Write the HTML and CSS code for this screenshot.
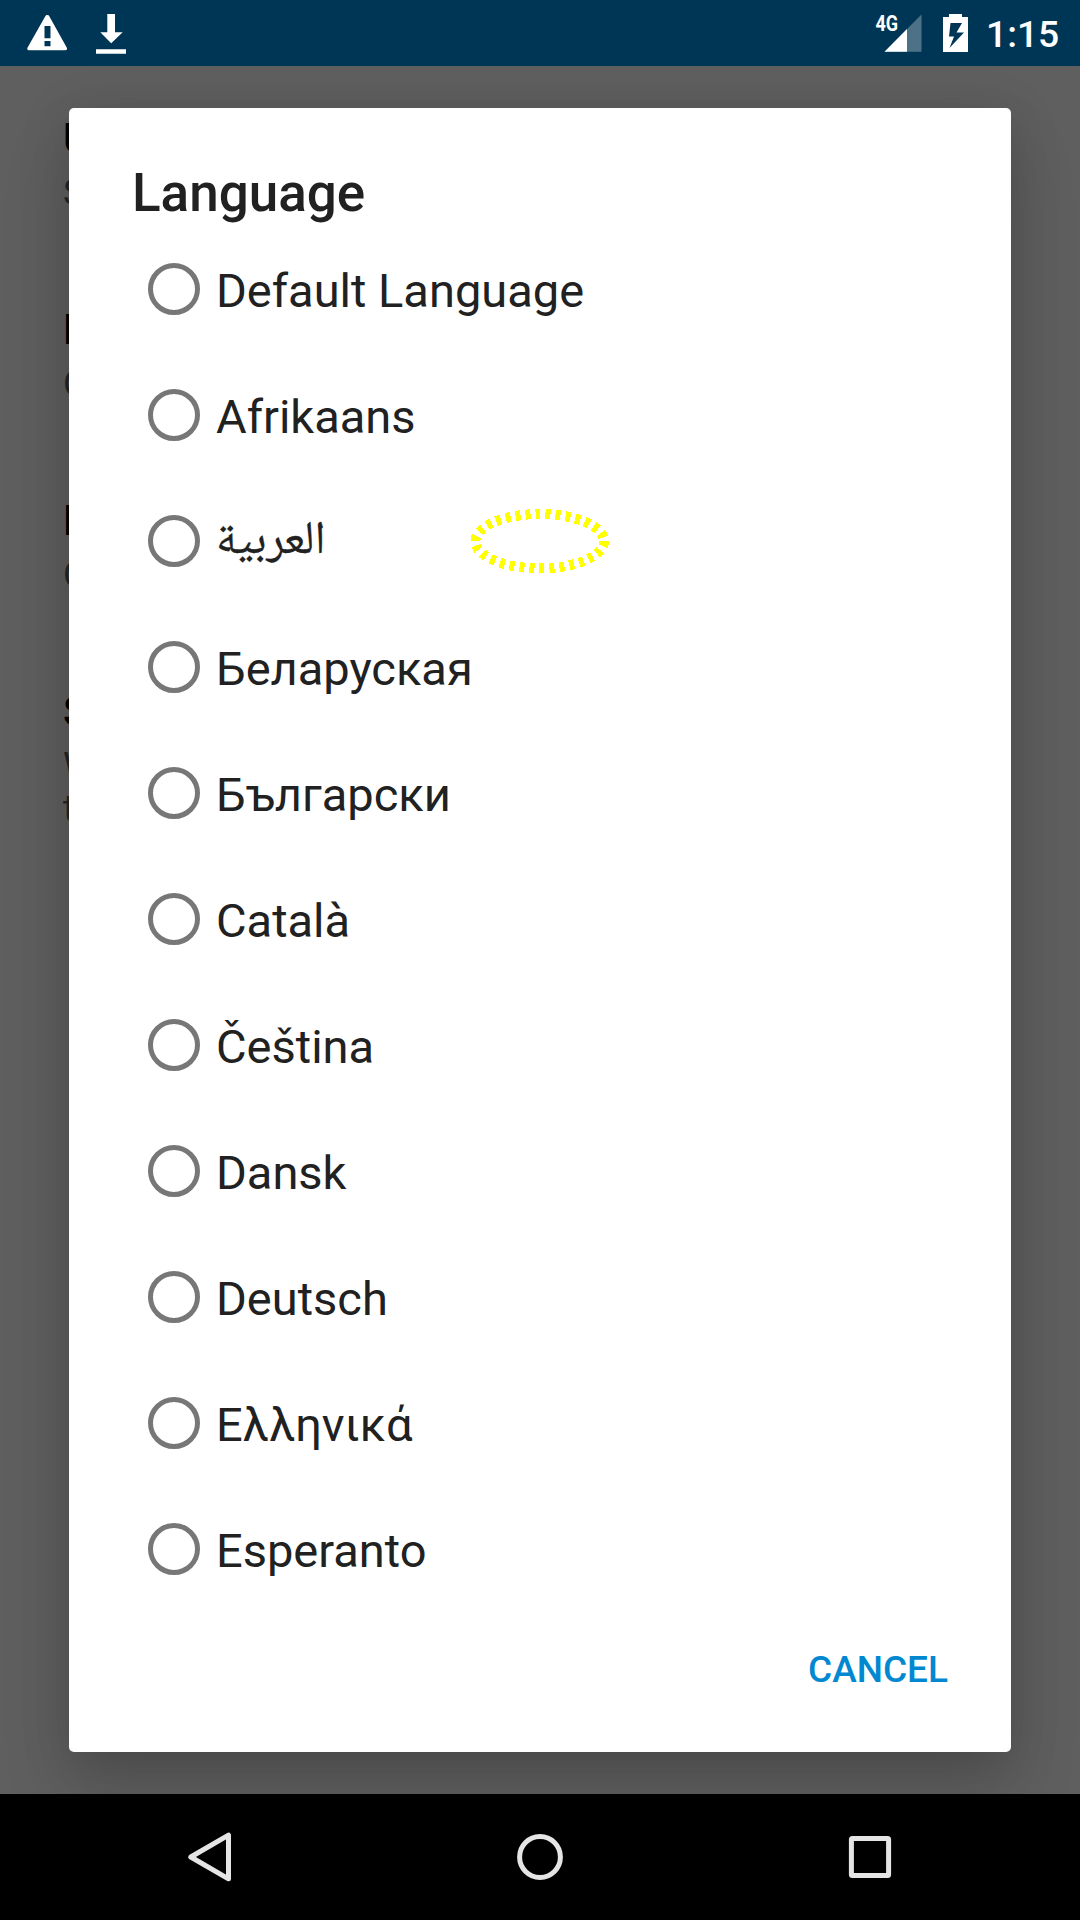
FILE: index.html
```html
<!DOCTYPE html>
<html lang="en">
<head>
<meta charset="utf-8">
<title>Language</title>
<link rel="stylesheet" href="styles.css">
</head>
<body>
<div class="screen">
  <header class="status-bar">
    <svg class="status-left" width="140" height="66" viewBox="0 0 140 66" fill="#fff">
      <path fill-rule="evenodd" d="M47.300 15c1 0 1.600.5 2 1.300L66.700 47.500c.8 1.500.2 2.800-1.400 2.800H29c-1.600 0-2.200-1.300-1.400-2.800L45.300 16.300c.4-.8 1-1.300 2-1.300zM44.500 26v12.300h6V26zM44.500 41v5.300h6V41z"/>
      <path d="M107.300 14h7.700v18.300h7.700L111.200 43.200 100.300 32.300h7zM96 49.300h30v4.400H96z"/>
    </svg>
    <div class="status-right">
      <svg width="110" height="66" viewBox="0 0 110 66" fill="#fff">
        <text class="network" transform="translate(5.500 31.300) scale(.8 1)">4G</text>
        <path fill-opacity=".3" d="M51.500 14.500v37.300H14.500z"/>
        <path d="M37 29v22.800H14.500z"/>
        <path fill-rule="evenodd" d="M79 14h13v3h6v35H73V17h6zM80.500 23 79 36.500h5L79.500 48 94 32.500h-7.500L92 23z"/>
      </svg>
      <span class="clock">1:15</span>
    </div>
  </header>

  <main class="content">
    <section class="pref"><h2>U</h2><p>S</p></section>
    <section class="pref"><h2>L</h2><p>C</p></section>
    <section class="pref"><h2>L</h2><p>C</p></section>
    <section class="pref"><h2>S</h2><p>W<br>t</p></section>

    <div class="dialog" role="dialog">
      <h1>Language</h1>
      <ul class="options">
        <li><i class="radio"></i><span>Default Language</span></li>
        <li><i class="radio"></i><span>Afrikaans</span></li>
        <li><i class="radio"></i><span class="arabic" lang="ar">العربية</span></li>
        <li><i class="radio"></i><span>Беларуская</span></li>
        <li><i class="radio"></i><span>Български</span></li>
        <li><i class="radio"></i><span>Català</span></li>
        <li><i class="radio"></i><span>Čeština</span></li>
        <li><i class="radio"></i><span>Dansk</span></li>
        <li><i class="radio"></i><span>Deutsch</span></li>
        <li><i class="radio"></i><span>Ελληνικά</span></li>
        <li><i class="radio"></i><span>Esperanto</span></li>
      </ul>
      <div class="actions"><button>CANCEL</button></div>
      <svg class="marker" width="142" height="66" viewBox="0 0 142 66">
        <ellipse cx="70.700" cy="33.200" rx="64.300" ry="27.200" fill="none" stroke="#ff0" stroke-width="10" stroke-dasharray="5 5" shape-rendering="crispEdges"/>
      </svg>
    </div>
  </main>

  <nav class="nav-bar">
    <svg width="60" height="60" viewBox="0 0 60 60"><path d="M48.500 8.200v43.600L10.800 30z"/></svg>
    <svg width="60" height="60" viewBox="0 0 60 60"><circle cx="30" cy="30" r="20.400"/></svg>
    <svg width="60" height="60" viewBox="0 0 60 60"><rect x="11.400" y="11.400" width="37.200" height="37.200" rx="1"/></svg>
  </nav>
</div>
</body>
</html>
```
FILE: styles.css
```css
* { box-sizing: border-box; margin: 0; padding: 0; }
body { font-family: Roboto, "Noto Sans", sans-serif; background: #5f5f5f; }
.screen { width: 1080px; height: 1920px; display: flex; flex-direction: column; overflow: hidden; }

.status-bar { height: 66px; flex: none; background: #003655; display: flex; justify-content: space-between; position: relative; z-index: 1; }
.status-right { display: flex; width: 210px; }
.status-right svg { flex: none; }
.network { font-size: 22.500px; font-weight: 700; }
.clock { color: #fff; font-size: 37.200px; font-weight: 500; line-height: 69px; padding-left: 6px; }

.content { flex: 1; position: relative; overflow: hidden; background: #5f5f5f; padding: 45px 0 0 63px; }
.pref { height: 191px; }
.pref h2 { font-size: 42px; font-weight: 500; line-height: 56px; color: #000; }
.pref p { font-size: 36.750px; line-height: 43px; padding-top: 4px; color: #262626; }

.dialog {
  position: absolute; left: 69px; top: 42px; width: 942px; height: 1644px;
  background: #fff; border-radius: 5px; color: #212121;
  box-shadow: 0 40px 70px rgba(0, 0, 0, .13), 0 8px 50px rgba(0, 0, 0, .15);
  display: flex; flex-direction: column;
}
.dialog h1 { height: 118px; padding: 52px 63px 0; font-size: 53px; line-height: 66px; font-weight: 500; }
.options { list-style: none; }
.options li { height: 126px; display: flex; align-items: center; padding-left: 78.500px; gap: 16px; font-size: 47px; }
.options span { line-height: 56px; padding-top: 4px; }
.radio { width: 52.500px; height: 52.500px; border: 5px solid #777; border-radius: 50%; }
.options .arabic { font-family: "Noto Naskh Arabic", "Noto Sans Arabic", "DejaVu Sans", sans-serif; font-size: 46.500px; -webkit-text-stroke: .3px #212121; }
.actions { display: flex; justify-content: flex-end; padding: 35px 63px 0; }
.actions button { border: 0; background: none; font: 500 37px/46px Roboto, sans-serif; color: #0288d1; }
.marker { position: absolute; left: 400px; top: 400px; }

.nav-bar { height: 126px; flex: none; background: #000; display: flex; justify-content: center; align-items: center; gap: 270px; position: relative; z-index: 1; }
.nav-bar svg { fill: none; stroke: #e5e5e5; stroke-width: 5; stroke-linejoin: round; }
```
